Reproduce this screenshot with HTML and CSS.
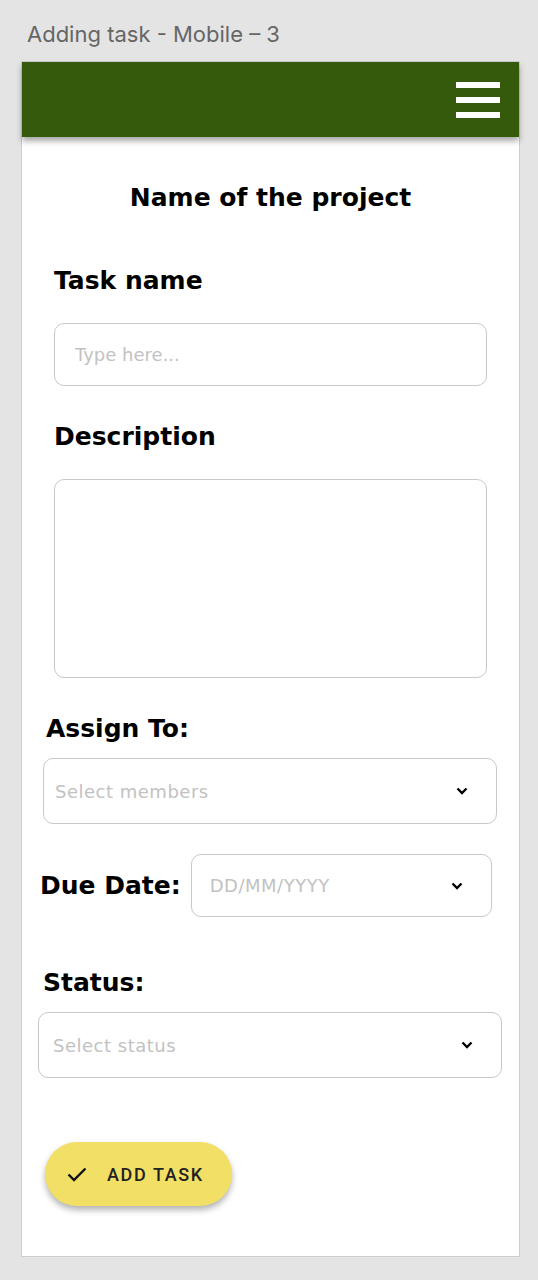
FILE: index.html
```html
<!DOCTYPE html>
<html lang="en">
  <head>
    <meta charset="UTF-8" />
    <meta name="viewport" content="width=device-width, initial-scale=1" />
    <title>Adding task - Mobile – 3</title>
    <link rel="stylesheet" href="styles.css">
  </head>
  <body>
    <div class="board-title">Adding task - Mobile – 3</div>

    <div class="artboard">
      <header class="topbar">
        <button class="menu-btn" aria-label="Menu">
          <span></span><span></span><span></span>
        </button>
      </header>

      <h1 class="project-name">Name of the project</h1>

      <form class="task-form">
        <div class="field field-name">
          <label class="label">Task name</label>
          <input class="text-input" type="text" placeholder="Type here..." />
        </div>

        <div class="field field-desc">
          <label class="label">Description</label>
          <textarea class="text-area"></textarea>
        </div>

        <div class="field field-assign">
          <label class="label">Assign To:</label>
          <div class="select">
            <span class="placeholder">Select members</span>
            <svg class="chevron" viewBox="0 0 12 8"><path d="M1.5 1.5 6 6l4.5-4.5" /></svg>
          </div>
        </div>

        <div class="field field-date">
          <label class="label">Due Date:</label>
          <div class="select select-date">
            <span class="placeholder">DD/MM/YYYY</span>
            <svg class="chevron" viewBox="0 0 12 8"><path d="M1.5 1.5 6 6l4.5-4.5" /></svg>
          </div>
        </div>

        <div class="field field-status">
          <label class="label">Status:</label>
          <div class="select select-status">
            <span class="placeholder">Select status</span>
            <svg class="chevron" viewBox="0 0 12 8"><path d="M1.5 1.5 6 6l4.5-4.5" /></svg>
          </div>
        </div>

        <button type="button" class="btn-add">
          <svg class="check" viewBox="0 0 20 15"><path d="M1.5 7.5l5.5 5.5L18.5 1.5" /></svg>
          ADD TASK
        </button>
      </form>
    </div>
  </body>
</html>
```

FILE: styles.css
```css
body {
  margin: 0;
  background-color: #e4e4e4;
  font-family: "DejaVu Sans", "Liberation Sans", sans-serif;
}

.board-title {
  padding: 20px 0 0 27px;
  height: 61px;
  box-sizing: border-box;
  font-family: "Inter", "Liberation Sans", sans-serif;
  font-size: 22px;
  line-height: 28px;
  color: #666;
}

.artboard {
  margin: 0 18px 24px 21px;
  height: 1196px;
  box-sizing: border-box;
  background-color: #fff;
  border: 1px solid #cdcdcd;
}

.topbar {
  height: 75px;
  background-color: #365a0c;
  box-shadow: 0 4px 6px rgba(0, 0, 0, 0.35);
  display: flex;
  justify-content: flex-end;
  align-items: flex-start;
}

.menu-btn {
  background: none;
  border: none;
  padding: 0;
  margin: 20px 19px 0 0;
  display: flex;
  flex-direction: column;
  gap: 9px;
}

.menu-btn span {
  display: block;
  width: 44px;
  height: 6px;
  background-color: #fff;
}

.project-name {
  margin: 46px 0 0 0;
  text-align: center;
  font-size: 25px;
  line-height: 30px;
  font-weight: 700;
  color: #000;
}

.task-form {
  display: flex;
  flex-direction: column;
}

.label {
  display: block;
  font-size: 25px;
  line-height: 30px;
  font-weight: 700;
  color: #000;
}

.field-name {
  margin: 53px 32px 0 32px;
}

.field-desc {
  margin: 36px 32px 0 32px;
}

.field-name .label {
  margin-bottom: 27px;
}

.field-desc .label {
  margin-bottom: 27px;
}

.text-input,
.text-area,
.select {
  box-sizing: border-box;
  width: 100%;
  border: 1px solid #c8c8c8;
  border-radius: 10px;
  background-color: #fff;
  font-family: "DejaVu Sans", "Liberation Sans", sans-serif;
  font-size: 18px;
  outline: none;
}

.text-input {
  height: 63px;
  padding: 0 20px;
}

.text-input::placeholder {
  color: #c2c2c2;
}

.text-area {
  height: 199px;
  resize: none;
  display: block;
}

.field-assign {
  margin: 36px 22px 0 21px;
}

.field-assign .label {
  margin: 0 0 14px 3px;
}

.select {
  height: 66px;
  display: flex;
  align-items: center;
  justify-content: space-between;
  padding: 0 28px 0 11px;
}

.placeholder {
  color: #c2c2c2;
  letter-spacing: 0.5px;
}

.chevron {
  width: 12px;
  height: 8px;
  fill: none;
  stroke: #000;
  stroke-width: 2.4;
}

.field-date {
  margin: 30px 27px 0 18px;
  display: flex;
  align-items: center;
  gap: 10px;
}

.field-date .label {
  white-space: nowrap;
}

.select-date {
  height: 63px;
  padding-left: 18px;
}

.field-status {
  margin: 51px 17px 0 16px;
}

.field-status .label {
  margin: 0 0 14px 5px;
}

.select-status {
  padding-left: 14px;
}

.btn-add {
  align-self: flex-start;
  margin: 64px 0 0 23px;
  height: 64px;
  padding: 0 28px 0 22px;
  display: flex;
  align-items: center;
  gap: 20px;
  border: none;
  border-radius: 32px;
  background-color: #f2df66;
  box-shadow: 0 4px 6px rgba(0, 0, 0, 0.3);
  font-family: "Roboto", sans-serif;
  font-weight: 500;
  font-size: 18px;
  letter-spacing: 1.6px;
  color: #222;
}

.check {
  width: 20px;
  height: 15px;
  fill: none;
  stroke: #111;
  stroke-width: 2.4;
}
```
